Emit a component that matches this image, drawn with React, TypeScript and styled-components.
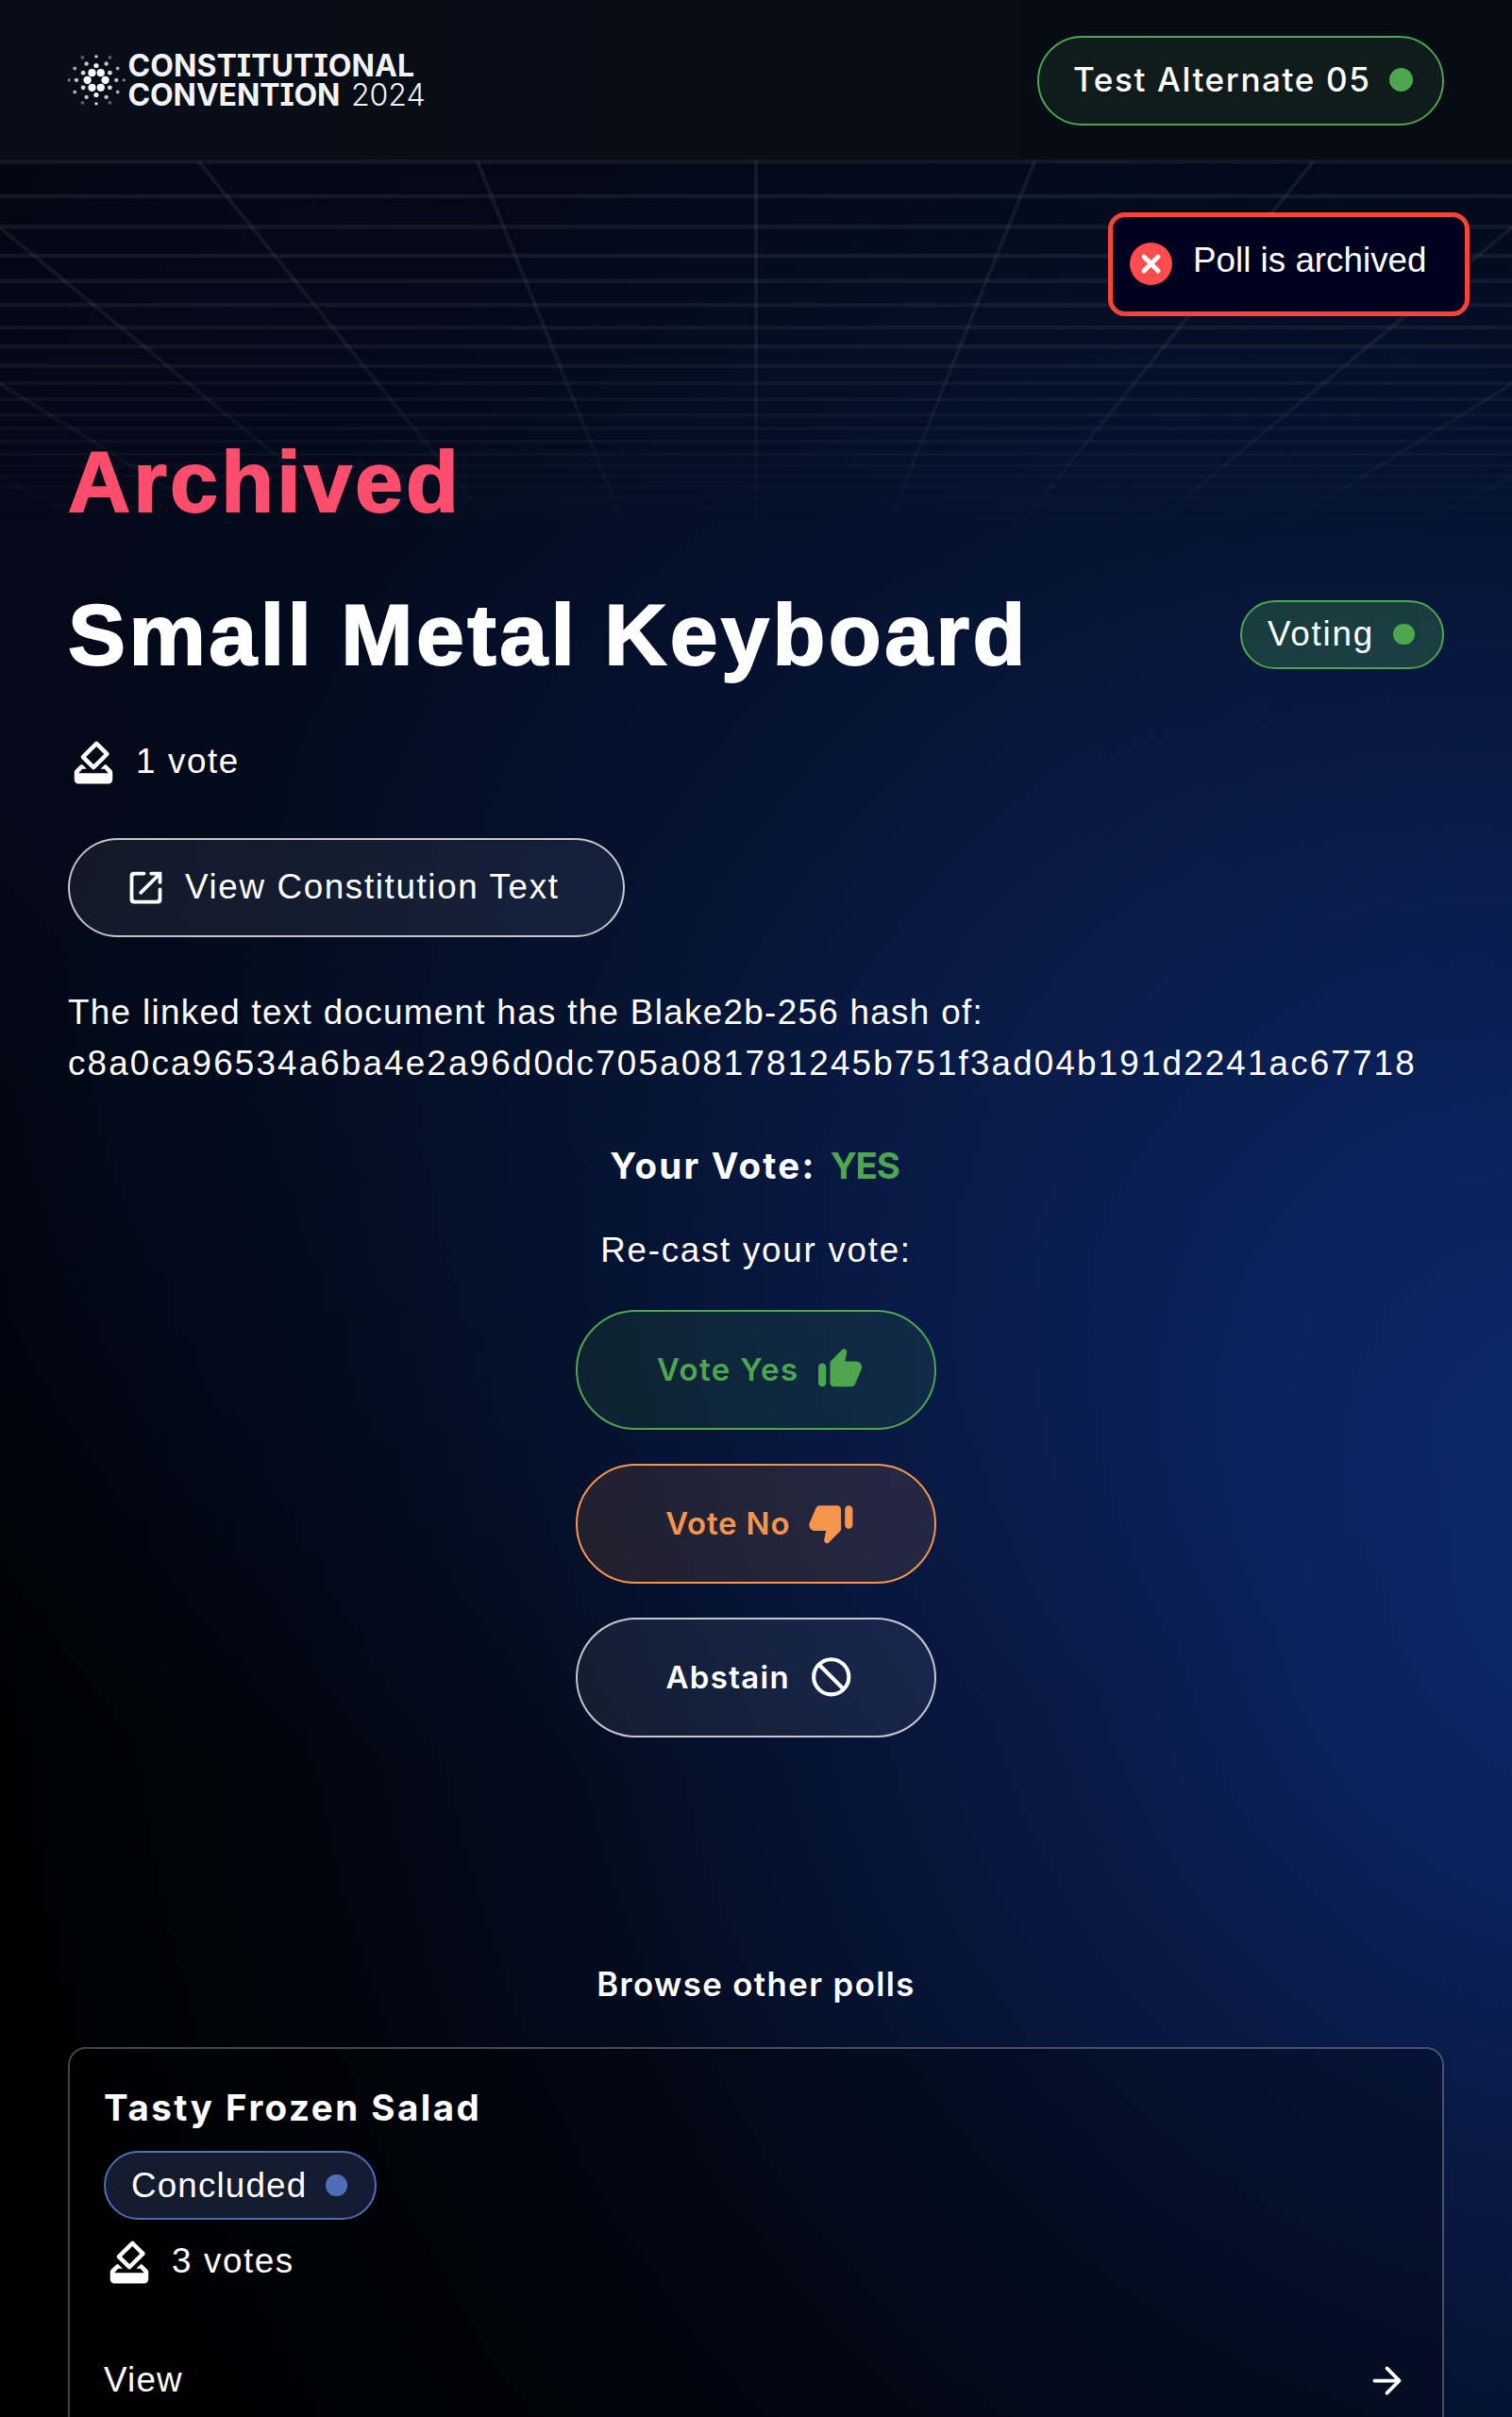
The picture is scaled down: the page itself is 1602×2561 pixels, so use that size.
import React from 'react';
import styled, { createGlobalStyle } from 'styled-components';

const GREEN = '#4ea64e';
const ORANGE = '#f6954c';
const BLUE = '#4f6db8';

const GlobalStyle = createGlobalStyle`
  *, *::before, *::after { box-sizing: border-box; }
  body { margin: 0; background: #000; }
  h1, h2, h3, p { margin: 0; }
  button { font: inherit; }
`;

const Page = styled.div`
  position: relative;
  isolation: isolate;
  height: 2561px;
  overflow: hidden;
  color: #fff;
  font-family: 'Liberation Sans', Arial, sans-serif;
  font-size: 36.8px;
  line-height: 54px;
  letter-spacing: 1.6px;
  background:
    radial-gradient(ellipse 1700px 1780px at 1720px 1640px,
      #0c2a6d 0%, #0b2460 17%, #091b4a 33%, #061334 51%, #030b1d 68%, #01050e 84%, #000 104%),
    radial-gradient(ellipse 1500px 1150px at 560px 680px,
      #030a1d 0%, #030918 40%, #01050f 72%, #000 105%),
    #000;
  background-blend-mode: screen;
`;

const GridBackdrop = styled.svg`
  position: absolute;
  z-index: -1;
  top: 169px;
  left: 0;
`;

const Header = styled.header`
  display: flex;
  align-items: center;
  justify-content: space-between;
  height: 169px;
  padding: 2px 72px 0;
  background: linear-gradient(90deg, #080d17, #070b14);
`;

const Pill = styled.span<{ $tone: string; $fill: string; $spacing: number }>`
  display: inline-flex;
  align-items: center;
  flex: none;
  height: 73px;
  padding: 0 29.5px 0 27px;
  gap: 20px;
  border: 2px solid ${p => p.$tone};
  border-radius: 50px;
  background: ${p => p.$fill};
  letter-spacing: ${p => p.$spacing}px;

  &::after {
    content: '';
    width: 22.5px;
    height: 22.5px;
    border-radius: 50%;
    background: ${p => p.$tone};
  }
`;

const UserPill = styled(Pill)`
  height: 95px;
  padding: 0 31px 3px 36.5px;
  gap: 19px;
  font-family: Inter, sans-serif;
  font-size: 35.1px;
  font-weight: 500;

  &::after {
    width: 25.5px;
    height: 25.5px;
    margin-top: 1px;
  }
`;

const Toast = styled.div`
  position: absolute;
  top: 225px;
  right: 45px;
  display: flex;
  align-items: center;
  width: 383px;
  height: 110px;
  padding: 0 18px 1px;
  gap: 22px;
  border: 5px solid #f94338;
  border-radius: 18px;
  background: #00001f;
  letter-spacing: 0;
`;

const ToastText = styled.span`
  padding-bottom: 7px;
`;

const Main = styled.main`
  display: flex;
  flex-direction: column;
  padding: 287px 72px 0;
`;

const Heading = styled.h1<{ $color?: string; $spacing: number }>`
  font-size: 91.5px;
  font-weight: 700;
  line-height: 108px;
  letter-spacing: ${p => p.$spacing}px;
  word-spacing: -1px;
  color: ${p => p.$color ?? '#fff'};
  -webkit-text-stroke: 1.8px currentColor;
`;

const TitleRow = styled.div`
  display: flex;
  align-items: center;
  justify-content: space-between;
  margin-top: 54px;
`;

const VoteCount = styled.div<{ $top: number }>`
  display: flex;
  align-items: center;
  gap: 18px;
  height: 54px;
  margin-top: ${p => p.$top}px;

  svg { margin-top: 2px; }
`;

const LinkButton = styled.button`
  display: flex;
  align-items: center;
  align-self: flex-start;
  width: 590px;
  height: 105px;
  margin-top: 54px;
  padding: 0 0 1px 58px;
  gap: 19px;
  border: 2px solid rgba(255, 255, 255, 0.75);
  border-radius: 53px;
  background: rgba(255, 255, 255, 0.065);
  color: #fff;
  letter-spacing: 1.63px;

  svg { margin-top: 1px; }
`;

const HashNote = styled.p`
  margin-top: 53px;
  letter-spacing: 1.32px;
`;

const Hash = styled.span`
  display: block;
  letter-spacing: 2.15px;
  white-space: nowrap;
`;

const VotePanel = styled.section`
  display: flex;
  flex-direction: column;
  align-items: center;
  margin-top: 54px;
`;

const YourVote = styled.p`
  display: flex;
  gap: 15px;
  padding-right: 3px;
  font-family: Inter, sans-serif;
  font-size: 38.5px;
  font-weight: 700;
  letter-spacing: 2.26px;
`;

const Choice = styled.span`
  color: ${GREEN};
  letter-spacing: -1.2px;
`;

const Recast = styled.p`
  margin-top: 36px;
  letter-spacing: 1.72px;
`;

const VoteButtons = styled.div`
  display: flex;
  flex-direction: column;
  gap: 36px;
  margin-top: 36px;
`;

const VoteButton = styled.button<{ $tone: string; $border: string; $fill: string; $spacing: number }>`
  display: flex;
  align-items: center;
  justify-content: center;
  width: 382px;
  height: 127px;
  padding: 0 0 1px 9px;
  gap: 19px;
  border: 2px solid ${p => p.$border};
  border-radius: 64px;
  background: ${p => p.$fill};
  color: ${p => p.$tone};
  font-family: Inter, sans-serif;
  font-size: 33px;
  font-weight: 600;
  letter-spacing: ${p => p.$spacing}px;
`;

const BrowseTitle = styled.h2`
  margin-top: 234px;
  font-family: Inter, sans-serif;
  font-size: 34.8px;
  font-weight: 600;
  line-height: 54px;
  letter-spacing: 1.38px;
  text-align: center;
`;

const Card = styled.article`
  display: flex;
  flex-direction: column;
  align-items: flex-start;
  height: 460px;
  margin-top: 40px;
  padding: 35px 36px 0;
  border: 2px solid rgba(255, 255, 255, 0.27);
  border-radius: 19px;
  background: rgba(0, 0, 0, 0.3);
`;

const CardTitle = styled.h3`
  margin-bottom: 19px;
  font-family: Inter, sans-serif;
  font-size: 38.5px;
  font-weight: 700;
  line-height: 54px;
  letter-spacing: 2.5px;
`;

const CardLink = styled.div`
  display: flex;
  align-items: center;
  justify-content: space-between;
  align-self: stretch;
  height: 54px;
  margin-top: 72px;
  letter-spacing: 1.2px;
`;

const LogoText = styled.text<{ $weight: number }>`
  font-family: Inter, sans-serif;
  font-size: 32px;
  font-weight: ${p => p.$weight};
  font-feature-settings: 'cv08';
  letter-spacing: 0;
  fill: #f2f3f5;
`;

const dots: [number, number, number, number][] = [
  [283, 230, 4.1, 1], [310, 230, 4.1, 1], [269, 253, 4.2, 1], [324, 253, 4.2, 1], [283, 277, 4.1, 1], [310, 277, 4.1, 1],
  [296, 207, 2.6, 0.95], [256, 230, 2.4, 0.85], [338, 230, 2.4, 0.85], [256, 277, 2.4, 0.85], [338, 277, 2.4, 0.85], [296, 300, 2.6, 0.95],
  [266, 201, 2.2, 0.75], [327, 201, 2.2, 0.75], [235, 253, 2.2, 0.75], [358, 253, 2.2, 0.75], [266, 307, 2.2, 0.75], [327, 307, 2.2, 0.75],
  [230, 216, 1.9, 0.65], [362, 216, 1.9, 0.65], [230, 291, 1.9, 0.65], [362, 291, 1.9, 0.65], [296, 178, 1.7, 0.85], [296, 328, 1.7, 0.85],
  [254, 181, 1.9, 0.35], [338, 181, 1.9, 0.35], [254, 325, 1.9, 0.35], [338, 325, 1.9, 0.35], [212, 253, 1.7, 0.5], [381, 253, 1.7, 0.5],
];

const Logo = () => (
  <svg width="390" height="84" viewBox="72 43.5 390 84">
    {dots.map(([x, y, r, o]) => (
      <circle key={`${x}-${y}`} cx={x / 2.904} cy={y / 3} r={r} fill="#fff" opacity={o} />
    ))}
    <LogoText $weight={650} x="135.5" y="80.5" textLength="303.5" lengthAdjust="spacing">CONSTITUTIONAL</LogoText>
    <LogoText $weight={650} x="135.5" y="111.2" textLength="225" lengthAdjust="spacing">CONVENTION</LogoText>
    <LogoText $weight={300} x="372" y="111.2" textLength="78.5" lengthAdjust="spacing">2024</LogoText>
  </svg>
);

const gridRows = [171.3, 208, 240.3, 271, 297.7, 323.3, 347, 367.3, 387.7, 406, 423, 439.7, 454, 467.7, 481.3, 493, 504.5, 516, 527, 537, 546, 555];
const gridRays = [-5, -4, -3, -2, -1, 0, 1, 2, 3, 4, 5];

const Grid = () => (
  <GridBackdrop width="1602" height="400" viewBox="0 169 1602 400">
    <defs>
      <linearGradient id="fade" x1="0" y1="169" x2="0" y2="569" gradientUnits="userSpaceOnUse">
        <stop offset="0" stopColor="#fff" />
        <stop offset="0.5" stopColor="#fff" stopOpacity="0.85" />
        <stop offset="0.8" stopColor="#fff" stopOpacity="0.45" />
        <stop offset="1" stopColor="#fff" stopOpacity="0" />
      </linearGradient>
      <mask id="gridMask" maskUnits="userSpaceOnUse" x="0" y="169" width="1602" height="400">
        <rect x="0" y="169" width="1602" height="400" fill="url(#fade)" />
      </mask>
    </defs>
    <g mask="url(#gridMask)" stroke="#fff" strokeOpacity="0.065" fill="none">
      {gridRows.map((y, i) => (
        <line key={y} x1="0" x2="1602" y1={y} y2={y} strokeWidth={i < 9 ? 4.4 : 3.4} />
      ))}
      {gridRays.map(k => (
        <line key={k} x1={801 + k * 295.3} y1="171" x2={801 + k * 295.3 * 0.45} y2="573.6" strokeWidth="4" />
      ))}
    </g>
  </GridBackdrop>
);

const BallotIcon = () => (
  <svg width="54" height="54" viewBox="0 0 24 24" fill="#fff">
    <path d="M18 13h-.68l-2 2h1.91L19 17H5l1.78-2h2.05l-2-2H6l-2.59 2.59c-.26.26-.41.61-.41.97V20c0 1.1.89 2 2 2h14c1.1 0 2-.89 2-2v-3.45c0-.36-.15-.71-.41-.96L18 13zm-1-5.05l-4.95 4.95-3.54-3.54 4.95-4.95L17 7.95zm-4.24-5.66L6.39 8.66c-.39.39-.39 1.02 0 1.41l4.95 4.95c.39.39 1.02.39 1.41 0l6.36-6.36c.39-.39.39-1.02 0-1.41L14.16 2.3c-.38-.4-1.01-.4-1.4-.01z" />
  </svg>
);

const LaunchIcon = () => (
  <svg width="45" height="45" viewBox="0 0 24 24" fill="#fff">
    <path d="M18 19H6c-.55 0-1-.45-1-1V6c0-.55.45-1 1-1h5c.55 0 1-.45 1-1s-.45-1-1-1H5c-1.11 0-2 .9-2 2v14c0 1.1.9 2 2 2h14c1.1 0 2-.9 2-2v-6c0-.55-.45-1-1-1s-1 .45-1 1v5c0 .55-.45 1-1 1zM14 4c0 .55.45 1 1 1h2.59l-9.13 9.13c-.39.39-.39 1.02 0 1.41.39.39 1.02.39 1.41 0L19 6.41V9c0 .55.45 1 1 1s1-.45 1-1V3h-6c-.55 0-1 .45-1 1z" />
  </svg>
);

const ThumbIcon = ({ down }: { down?: boolean }) => (
  <svg width="49.5" height="49.5" viewBox="0 0 24 24" fill="currentColor">
    <path
      transform={down ? 'rotate(180 12 12)' : undefined}
      d="M13.12 2.06 7.58 7.6c-.37.37-.58.88-.58 1.41V19c0 1.1.9 2 2 2h9c.8 0 1.52-.48 1.84-1.21l3.26-7.61C23.94 10.2 22.49 8 20.34 8h-5.65l.95-4.58c.1-.5-.05-1.01-.41-1.37-.59-.58-1.53-.58-2.11.01zM3 21c1.1 0 2-.9 2-2v-8c0-1.1-.9-2-2-2s-2 .9-2 2v8c0 1.1.9 2 2 2z"
    />
  </svg>
);

const BlockIcon = () => (
  <svg width="49.5" height="49.5" viewBox="0 0 24 24" fill="none" stroke="currentColor" strokeWidth="2">
    <circle cx="12" cy="12" r="9" />
    <path d="M5.2 5.2 18.8 18.8" />
  </svg>
);

const ArrowIcon = () => (
  <svg width="45" height="45" viewBox="0 0 24 24" fill="none" stroke="#fff" strokeWidth="2" strokeLinecap="round" strokeLinejoin="round">
    <path d="M5 12h14M12 5l7 7-7 7" />
  </svg>
);

const ErrorIcon = () => (
  <svg width="45" height="45" viewBox="0 0 45 45">
    <circle cx="22.5" cy="22.5" r="22.5" fill="#ff4b4b" />
    <path d="M15 15l15 15M30 15L15 30" stroke="#fff" strokeWidth="4.8" strokeLinecap="round" />
  </svg>
);

export default function App() {
  return (
    <Page>
      <GlobalStyle />
      <Grid />
      <Header>
        <Logo />
        <UserPill $tone={GREEN} $fill="#101c1c" $spacing={1.6}>Test Alternate 05</UserPill>
      </Header>
      <Toast>
        <ErrorIcon />
        <ToastText>Poll is archived</ToastText>
      </Toast>
      <Main>
        <Heading $color="#ff4d6d" $spacing={3.2}>Archived</Heading>
        <TitleRow>
          <Heading $spacing={3.45}>Small Metal Keyboard</Heading>
          <Pill $tone={GREEN} $fill="rgba(78, 166, 78, 0.27)" $spacing={1.77}>Voting</Pill>
        </TitleRow>
        <VoteCount $top={54}><BallotIcon />1 vote</VoteCount>
        <LinkButton><LaunchIcon />View Constitution Text</LinkButton>
        <HashNote>
          The linked text document has the Blake2b-256 hash of:
          <Hash>c8a0ca96534a6ba4e2a96d0dc705a081781245b751f3ad04b191d2241ac67718</Hash>
        </HashNote>
        <VotePanel>
          <YourVote>Your Vote: <Choice>YES</Choice></YourVote>
          <Recast>Re-cast your vote:</Recast>
          <VoteButtons>
            <VoteButton $tone={GREEN} $border={GREEN} $fill="rgba(78, 166, 78, 0.12)" $spacing={1.4}>Vote Yes<ThumbIcon /></VoteButton>
            <VoteButton $tone={ORANGE} $border={ORANGE} $fill="rgba(246, 149, 76, 0.12)" $spacing={0.8}>Vote No<ThumbIcon down /></VoteButton>
            <VoteButton $tone="#fff" $border="rgba(255, 255, 255, 0.75)" $fill="rgba(255, 255, 255, 0.065)" $spacing={1.3}>Abstain<BlockIcon /></VoteButton>
          </VoteButtons>
        </VotePanel>
        <BrowseTitle>Browse other polls</BrowseTitle>
        <Card>
          <CardTitle>Tasty Frozen Salad</CardTitle>
          <Pill $tone={BLUE} $fill="rgba(79, 109, 184, 0.25)" $spacing={1.15}>Concluded</Pill>
          <VoteCount $top={17}><BallotIcon />3 votes</VoteCount>
          <CardLink>View<ArrowIcon /></CardLink>
        </Card>
      </Main>
    </Page>
  );
}
